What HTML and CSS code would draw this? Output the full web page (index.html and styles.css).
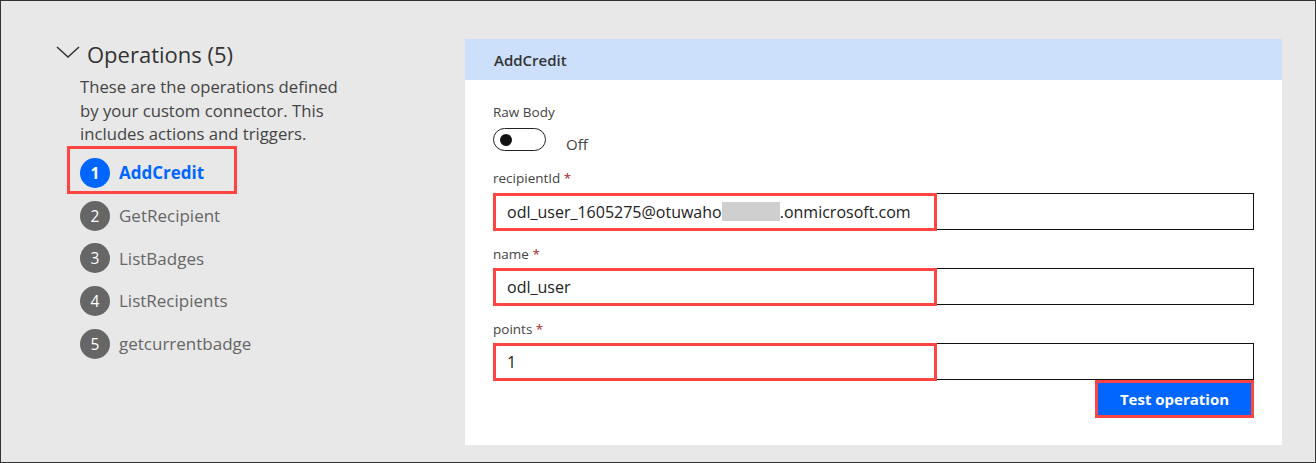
FILE: index.html
```html
<!DOCTYPE html>
<html lang="en">
<head>
<meta charset="utf-8">
<title>Operations</title>
<link rel="stylesheet" href="styles.css">
</head>
<body>
<div class="frame">
  <aside class="ops">
    <div class="ops-head">
      <svg class="chev" width="24" height="12" viewBox="0 0 24 12" aria-hidden="true"><path d="M1 1 L12 11 L23 1" fill="none" stroke="#333" stroke-width="1.5"/></svg>
      <h2 class="ops-title">Operations (5)</h2>
    </div>
    <p class="ops-desc">These are the operations defined by your custom connector. This includes actions and triggers.</p>
    <ul class="ops-list">
      <li class="op active"><span class="num">1</span><span class="op-name">AddCredit</span></li>
      <li class="op"><span class="num">2</span><span class="op-name">GetRecipient</span></li>
      <li class="op"><span class="num">3</span><span class="op-name">ListBadges</span></li>
      <li class="op"><span class="num">4</span><span class="op-name">ListRecipients</span></li>
      <li class="op"><span class="num">5</span><span class="op-name">getcurrentbadge</span></li>
    </ul>
  </aside>
  <section class="card">
    <header class="card-head">AddCredit</header>
    <div class="card-body">
      <div class="label raw-label">Raw Body</div>
      <div class="toggle-row">
        <span class="toggle"><span class="knob"></span></span>
        <span class="toggle-text">Off</span>
      </div>
      <div class="label f1">recipientId <span class="req">*</span></div>
      <div class="input"><span class="val">odl_user_1605275@otuwaho<span class="redact"></span>.onmicrosoft.com</span><span class="hl"></span></div>
      <div class="label f2">name <span class="req">*</span></div>
      <div class="input"><span class="val">odl_user</span><span class="hl"></span></div>
      <div class="label f2">points <span class="req">*</span></div>
      <div class="input"><span class="val">1</span><span class="hl"></span></div>
      <div class="actions"><button class="btn">Test operation</button></div>
    </div>
  </section>
</div>
</body>
</html>
```
FILE: styles.css
```css
*, *::before, *::after { box-sizing: border-box; }
html, body { margin: 0; padding: 0; }
body {
  font-family: "Open Sans", "Noto Sans", sans-serif;
  color: #333;
}
.frame {
  width: 1316px;
  height: 463px;
  border: 1px solid #333;
  background: #e8e8e8;
  display: flex;
  align-items: flex-start;
}
.ops {
  width: 464px;
  flex: none;
  padding: 38px 0 0 55px;
}
.ops-head {
  display: flex;
  align-items: center;
  gap: 7px;
  height: 30px;
}
.chev { display: block; margin-top: -5px; }
.ops-title {
  margin: 0;
  font-weight: 400;
  font-size: 22px;
  color: #333;
  line-height: 30px;
}
.ops-desc {
  margin: 6px 0 0 24px;
  width: 275px;
  font-size: 16.7px;
  line-height: 23.5px;
  color: #444;
}
.ops-list {
  list-style: none;
  margin: 6px 0 0 24px;
  padding: 0;
}
.op {
  height: 42.7px;
  display: flex;
  align-items: center;
  gap: 9px;
  color: #666;
  font-size: 17px;
  position: relative;
}
.num {
  width: 30px;
  height: 30px;
  border-radius: 50%;
  background: #666;
  color: #fff;
  font-size: 15.5px;
  font-weight: 400;
  display: flex;
  align-items: center;
  justify-content: center;
  flex: none;
}
.op.active { color: #0066ff; font-weight: 700; }
.op.active .num { background: #0066ff; font-weight: 700; }
.op.active::after {
  content: "";
  position: absolute;
  left: -13px;
  top: -6px;
  width: 170px;
  height: 48px;
  border: 3px solid #ff4444;
}
.card {
  width: 817px;
  height: 406px;
  margin-top: 38px;
  background: #fff;
  flex: none;
}
.card-head {
  height: 41px;
  background: #cce0fc;
  padding-left: 29px;
  display: flex;
  align-items: center;
  font-size: 15px;
  font-weight: 600;
  color: #333;
}
.card-body {
  padding: 0 28px;
  display: flex;
  flex-direction: column;
}
.label {
  font-size: 13.5px;
  line-height: 20px;
  color: #444;
}
.req { color: #a4262c; }
.raw-label { margin-top: 22px; }
.toggle-row {
  display: flex;
  align-items: flex-start;
  margin-top: 6px;
  height: 23px;
}
.toggle {
  width: 53px;
  height: 23px;
  border: 1.5px solid #222;
  border-radius: 12px;
  display: flex;
  align-items: center;
  padding-left: 6px;
}
.knob {
  width: 12px;
  height: 12px;
  border-radius: 50%;
  background: #111;
}
.toggle-text {
  margin-left: 20px;
  margin-top: 6px;
  font-size: 15px;
  line-height: 20px;
  color: #444;
}
.f1 { margin-top: 17px; }
.f2 { margin-top: 14px; }
.input {
  margin-top: 5px;
  height: 37px;
  border: 1px solid #111;
  display: flex;
  align-items: center;
  padding-left: 13px;
  position: relative;
  font-size: 16px;
  color: #222;
}
.f2 + .input { margin-top: 4px; }
.val { display: flex; align-items: center; white-space: nowrap; }
.redact {
  display: inline-block;
  width: 58px;
  height: 19px;
  background: #cfcfcf;
}
.hl {
  position: absolute;
  left: -1px;
  top: -1px;
  width: 444px;
  height: 38px;
  border: 3px solid #ff4444;
}
.actions {
  display: flex;
  justify-content: flex-end;
}
.btn {
  width: 159px;
  height: 38px;
  margin-top: 0;
  background: #0066ff;
  border: 3px solid #ff4444;
  color: #fff;
  font-family: "Open Sans", "Noto Sans", sans-serif;
  font-size: 15px;
  font-weight: 700;
  padding: 0;
  cursor: pointer;
}
```
